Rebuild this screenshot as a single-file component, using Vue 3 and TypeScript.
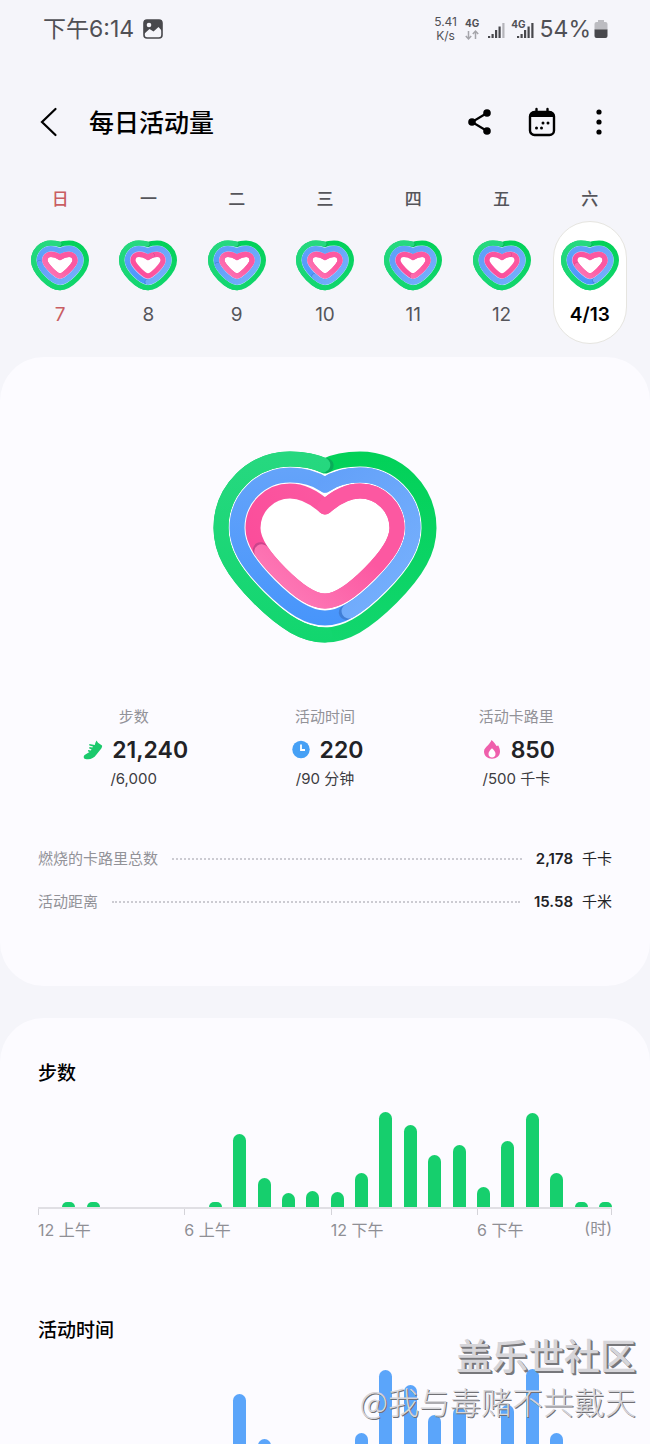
<script setup lang="ts">
interface RingSpec {
  radius: number
  reach: number
  bottom: number
  notch: number
  lift: number
}
interface Span {
  from: number
  to: number
}
interface Day {
  week: string
  label: string
  sunday?: boolean
  selected?: boolean
  blue: number
  pink: number
}

const CX = 112
const LOBE = 35
const LOBE_Y = 78
const PULL = 0.7

// Right half: lobe arc, then two curves that meet on the diagonal x + y = reach. The left half mirrors it.
function heart({ radius, reach, bottom, notch, lift }: RingSpec): string {
  const top = LOBE_Y - radius
  const edge = LOBE + radius
  const shoulder = reach - edge
  const tip = reach - bottom
  const mx = (edge + tip) / 2
  const my = (shoulder + bottom) / 2
  const shoulderY = LOBE_Y + (shoulder - LOBE_Y) * PULL
  const ux = mx + (edge - mx) * PULL
  const uy = my + (shoulder - my) * PULL
  const lx = mx + (tip - mx) * PULL
  const ly = my + (bottom - my) * PULL
  const tx = tip * PULL
  const mid = notch - lift
  return [
    `M${CX} ${notch}`,
    `C${CX + 10} ${mid} ${CX + 21} ${top} ${CX + LOBE} ${top}`,
    `A${radius} ${radius} 0 0 1 ${CX + edge} ${LOBE_Y}`,
    `C${CX + edge} ${shoulderY} ${CX + ux} ${uy} ${CX + mx} ${my}`,
    `C${CX + lx} ${ly} ${CX + tx} ${bottom} ${CX} ${bottom}`,
    `C${CX - tx} ${bottom} ${CX - lx} ${ly} ${CX - mx} ${my}`,
    `C${CX - ux} ${uy} ${CX - edge} ${shoulderY} ${CX - edge} ${LOBE_Y}`,
    `A${radius} ${radius} 0 0 1 ${CX - LOBE} ${top}`,
    `C${CX - 21} ${top} ${CX - 10} ${mid} ${CX} ${notch}Z`,
  ].join(' ')
}

function rings(specs: RingSpec[], spans: Span[]) {
  const names = ['green', 'blue', 'pink']
  return specs.map((spec, i) => ({
    name: names[i],
    d: heart(spec),
    dash: `${spans[i].to - spans[i].from} 200`,
    offset: -spans[i].from,
    shadow: -(spans[i].to + 0.6) % 100,
  }))
}

const largeSpecs: RingSpec[] = [
  { radius: 69, reach: 214, bottom: 185, notch: 16, lift: 5 },
  { radius: 53, reach: 191, bottom: 168, notch: 35, lift: 7 },
  { radius: 37, reach: 168, bottom: 151, notch: 57, lift: 9 },
]
const smallSpecs: RingSpec[] = [
  { radius: 67, reach: 213, bottom: 184, notch: 17, lift: 5 },
  { radius: 45, reach: 181, bottom: 161, notch: 42, lift: 6 },
  { radius: 23, reach: 149, bottom: 138, notch: 67, lift: 8 },
]

const today = rings(largeSpecs, [{ from: 50, to: 99.6 }, { from: 0, to: 45 }, { from: 0, to: 70 }])

const days: Day[] = [
  { week: '日', label: '7', sunday: true, blue: 74, pink: 98 },
  { week: '一', label: '8', blue: 50, pink: 5 },
  { week: '二', label: '9', blue: 72, pink: 99 },
  { week: '三', label: '10', blue: 60, pink: 97 },
  { week: '四', label: '11', blue: 99, pink: 50 },
  { week: '五', label: '12', blue: 99, pink: 9 },
  { week: '六', label: '4/13', selected: true, blue: 45, pink: 70 },
]
const week = days.map((day) => ({
  ...day,
  rings: rings(smallSpecs, [
    { from: 50, to: 99 },
    { from: 0, to: day.blue },
    { from: 0, to: day.pink },
  ]),
}))

const stats = [
  { icon: 'shoe', name: '步数', value: '21,240', goal: '/6,000' },
  { icon: 'clock', name: '活动时间', value: '220', goal: '/90 分钟' },
  { icon: 'flame', name: '活动卡路里', value: '850', goal: '/500 千卡' },
]
const totals = [
  { name: '燃烧的卡路里总数', value: '2,178', unit: '千卡' },
  { name: '活动距离', value: '15.58', unit: '千米' },
]
const charts = [
  {
    name: '步数',
    tone: 'steps',
    bars: [0, 5, 5, 0, 0, 0, 0, 5, 73, 29, 14, 16, 15, 34, 95, 82, 52, 62, 20, 66, 94, 34, 5, 5],
    hours: ['12 上午', '6 上午', '12 下午', '6 下午'],
  },
  {
    name: '活动时间',
    tone: 'time',
    bars: [0, 0, 0, 0, 0, 0, 0, 0, 70, 25, 8, 10, 9, 31, 94, 79, 49, 57, 12, 59, 95, 31, 0, 0],
    hours: [],
  },
]
</script>

<template>
  <div class="screen">
    <svg class="defs" width="0" height="0" aria-hidden="true">
      <defs>
        <linearGradient id="g-base" gradientUnits="userSpaceOnUse" x1="112" y1="0" x2="112" y2="192">
          <stop offset="0" stop-color="#02d158" /><stop offset="1" stop-color="#12d66e" />
        </linearGradient>
        <linearGradient id="g-over" gradientUnits="userSpaceOnUse" x1="112" y1="0" x2="112" y2="192">
          <stop offset="0" stop-color="#27d880" /><stop offset="1" stop-color="#12d66e" />
        </linearGradient>
        <linearGradient id="b-base" gradientUnits="userSpaceOnUse" x1="112" y1="20" x2="112" y2="176">
          <stop offset="0" stop-color="#64a3fa" /><stop offset="1" stop-color="#4795fb" />
        </linearGradient>
        <linearGradient id="b-over" gradientUnits="userSpaceOnUse" x1="100" y1="30" x2="200" y2="120">
          <stop offset="0" stop-color="#62a0f9" /><stop offset="1" stop-color="#74aefc" />
        </linearGradient>
        <linearGradient id="p-base" gradientUnits="userSpaceOnUse" x1="112" y1="50" x2="40" y2="110">
          <stop offset="0" stop-color="#fb57a0" /><stop offset="1" stop-color="#fb4c9a" />
        </linearGradient>
        <linearGradient id="p-over" gradientUnits="userSpaceOnUse" x1="160" y1="40" x2="70" y2="140">
          <stop offset="0.4" stop-color="#fc58a1" /><stop offset="1" stop-color="#fd77b5" />
        </linearGradient>
      </defs>
    </svg>

    <div class="status">
      <div class="status-left">
        <span class="time">下午6:14</span>
        <svg width="20" height="20" viewBox="0 0 20 20" aria-hidden="true">
          <rect x="1" y="1" width="18" height="18" rx="3" fill="none" stroke="#48484c" stroke-width="1.6" />
          <path d="M1 3Q1 1 3 1H17Q19 1 19 3V12L15.500 8L10.500 12.500L6.500 10L1 15Z" fill="#48484c" />
          <circle cx="6" cy="6" r="2.300" fill="#f6f5fa" />
        </svg>
      </div>
      <div class="status-right">
        <span class="speed"><span>5.41</span><span>K/s</span></span>
        <span class="network">
          <b>4G</b>
          <svg width="14" height="10" viewBox="0 0 14 10" fill="none" stroke="#a5a5aa" stroke-width="1.5" aria-hidden="true">
            <path d="M3.500 1V9M0.800 6L3.500 9L6.200 6M10.500 9V1M7.800 4L10.500 1L13.200 4" />
          </svg>
        </span>
        <svg class="signal" width="17" height="17" viewBox="0 0 17 17" fill="#48484c" aria-hidden="true">
          <path d="M0 14H2.200V16H0ZM3.500 12H5.700V16H3.500ZM7 8H9.200V16H7ZM10.500 4.500H12.700V16H10.500Z" />
          <path d="M14.300 1H16.500V16H14.300Z" fill="#b5b5ba" />
        </svg>
        <span class="sim">
          <b>4G</b>
          <svg class="signal" width="17" height="17" viewBox="0 0 17 17" fill="#48484c" aria-hidden="true">
            <path d="M0 14H2.200V16H0ZM3.500 12H5.700V16H3.500ZM7 8H9.200V16H7ZM10.500 4.500H12.700V16H10.500ZM14.300 1H16.500V16H14.300Z" />
          </svg>
        </span>
        <span class="percent">54%</span>
        <svg width="14" height="20" viewBox="0 0 14 20" aria-hidden="true">
          <path d="M4 1H10V3H11.500Q13.500 3 13.500 5V11H0.500V5Q0.500 3 2.500 3H4Z" fill="#bcbcc1" />
          <path d="M0.500 10.500H13.500V17Q13.500 19 11.500 19H2.500Q0.500 19 0.500 17Z" fill="#48484c" />
        </svg>
      </div>
    </div>

    <header class="bar">
      <button type="button" class="back" aria-label="返回">
        <svg width="18" height="30" viewBox="0 0 18 30" fill="none" stroke="#000" stroke-width="2.2" stroke-linecap="round" aria-hidden="true">
          <path d="M15.500 1L2 14L15.500 27" />
        </svg>
      </button>
      <h1>每日活动量</h1>
      <button type="button" class="share" aria-label="分享">
        <svg width="24" height="28" viewBox="0 0 24 28" aria-hidden="true">
          <path d="M20 4L5 13L20 22" fill="none" stroke="#000" stroke-width="2.2" />
          <circle cx="20" cy="4" r="3.800" /><circle cx="5" cy="13" r="3.800" /><circle cx="20" cy="22" r="3.800" />
        </svg>
      </button>
      <button type="button" class="calendar" aria-label="日历">
        <svg width="28" height="30" viewBox="0 0 28 30" aria-hidden="true">
          <path d="M8.500 1V6M19.500 1V6" stroke="#000" stroke-width="2.400" stroke-linecap="round" />
          <rect x="2" y="4" width="24" height="23" rx="4.500" fill="none" stroke="#000" stroke-width="2.400" />
          <path d="M2 9V8Q2 3.500 6 3.500H22Q26 3.500 26 8V9Z" />
          <circle cx="15" cy="15" r="1.500" /><circle cx="20" cy="15" r="1.500" />
          <circle cx="8.500" cy="20" r="1.500" /><circle cx="13.500" cy="20" r="1.500" />
        </svg>
      </button>
      <button type="button" class="more" aria-label="更多">
        <svg width="8" height="28" viewBox="0 0 8 28" aria-hidden="true">
          <circle cx="4" cy="3" r="2.600" /><circle cx="4" cy="13" r="2.600" /><circle cx="4" cy="23" r="2.600" />
        </svg>
      </button>
    </header>

    <nav class="week" aria-label="星期">
      <button v-for="day in week" :key="day.label" type="button" class="day" :class="{ sunday: day.sunday }" :aria-pressed="!!day.selected">
        <span class="weekday">{{ day.week }}</span>
        <span class="pill" :class="{ selected: day.selected }">
          <svg class="mini" viewBox="0 0 224 192" aria-hidden="true">
            <g v-for="ring in day.rings" :key="ring.name" :class="ring.name">
              <path class="base" :d="ring.d" />
              <path class="shade" :d="ring.d" pathLength="100" stroke-dasharray="0.01 200" :stroke-dashoffset="ring.shadow" />
              <path class="over" :d="ring.d" pathLength="100" :stroke-dasharray="ring.dash" :stroke-dashoffset="ring.offset" />
            </g>
          </svg>
          <span class="date">{{ day.label }}</span>
        </span>
      </button>
    </nav>

    <main>
      <section class="card summary">
        <svg class="hero" viewBox="0 0 224 192" role="img" aria-label="每日活动量">
          <g v-for="ring in today" :key="ring.name" :class="ring.name">
            <path class="base" :d="ring.d" />
            <path class="shade" :d="ring.d" pathLength="100" stroke-dasharray="0.01 200" :stroke-dashoffset="ring.shadow" />
            <path class="over" :d="ring.d" pathLength="100" :stroke-dasharray="ring.dash" :stroke-dashoffset="ring.offset" />
          </g>
        </svg>

        <ul class="stats">
          <li v-for="stat in stats" :key="stat.name">
            <span class="stat-name">{{ stat.name }}</span>
            <span class="stat-value">
              <svg width="24" height="24" viewBox="0 0 24 24" aria-hidden="true">
                <path v-if="stat.icon === 'shoe'" fill="#1bc96c" d="M17.500 2.500L19 4.800L23 7.600C23.400 8.500 22.800 9.600 22.300 10.500L17.500 16.500C15 19.800 12.500 21.200 9 21.200H7.500C4.300 21.200 4 18 6 16.700L10.500 14.100L8.800 13.300L9.300 12.100L11.800 12.500L12.600 11.500L10 10.300L10.600 9.100L13.400 9.600L14 8.600L10.300 7.600V6L15.800 7.100Q16.300 4.500 17.500 2.500Z" />
                <template v-else-if="stat.icon === 'clock'">
                  <circle cx="14" cy="11.500" r="8.700" fill="#46a0f5" />
                  <path d="M14 6.500V12H18" fill="none" stroke="#fff" stroke-width="1.800" />
                </template>
                <template v-else>
                  <path fill="#ef5fac" d="M13.500 2C16 3.800 17.300 6 18.500 8L20.300 7.500C21.300 9.500 22 11.500 22 13.500C22 17.800 18.500 20.700 14 20.700C9.500 20.700 6 17.800 6 13.500C6 10.500 8 9.500 9.700 7.500C11.300 5.700 12.800 4 13.500 2Z" />
                  <path fill="#fff" d="M14 10.300C16.300 12.500 17.500 14 17.500 16C17.500 18.300 16 19.400 14 19.400C12 19.400 10.500 18.300 10.500 16C10.500 14 11.700 12.500 14 10.300Z" />
                </template>
              </svg>
              <strong>{{ stat.value }}</strong>
            </span>
            <span class="stat-goal">{{ stat.goal }}</span>
          </li>
        </ul>

        <dl class="totals">
          <div v-for="total in totals" :key="total.name">
            <dt>{{ total.name }}</dt>
            <dd><strong>{{ total.value }}</strong><span>{{ total.unit }}</span></dd>
          </div>
        </dl>
      </section>

      <section class="card details">
        <article v-for="chart in charts" :key="chart.name" class="chart">
          <h2>{{ chart.name }}</h2>
          <div class="bars" :class="chart.tone">
            <i v-for="(value, hour) in chart.bars" :key="hour" :style="{ height: value + 'px' }"></i>
          </div>
          <div v-if="chart.hours.length" class="axis">
            <span v-for="hour in chart.hours" :key="hour">{{ hour }}</span>
            <span class="unit">(时)</span>
          </div>
        </article>
      </section>
    </main>

    <div class="watermark">
      <span class="community">盖乐世社区</span>
      <span class="author">@我与毒赌不共戴天</span>
    </div>
  </div>
</template>

<style>
html,
body {
  background: #f5f5fa;
}
</style>

<style scoped>
.screen {
  position: relative;
  height: 100vh;
  overflow: hidden;
  background: #f5f5fa;
  color: #222226;
  font-family: Inter, "Noto Sans CJK SC", sans-serif;
  font-size: 15px;
  line-height: 20px;
}
.defs {
  position: absolute;
}
button {
  margin: 0;
  padding: 0;
  border: 0;
  background: none;
  color: inherit;
  font: inherit;
}
svg {
  display: block;
  flex: none;
  overflow: visible;
}
.status {
  display: flex;
  justify-content: space-between;
  align-items: center;
  height: 57px;
  padding: 0 42px 0 43px;
  color: #505055;
}
.status-left,
.status-right {
  display: flex;
  align-items: center;
}
.status-left {
  gap: 9px;
}
.time {
  font-size: 23px;
  line-height: 32px;
}
.speed {
  display: flex;
  flex-direction: column;
  align-items: center;
  margin-right: 8px;
  font-size: 12px;
  line-height: 14px;
}
.network {
  display: flex;
  flex-direction: column;
  align-items: center;
  gap: 1px;
  margin-right: 9px;
}
b {
  font-size: 10px;
  font-weight: 700;
  line-height: 11px;
}
.signal {
  margin-top: 3px;
}
.sim {
  display: flex;
  align-items: flex-start;
  margin: 0 6px;
}
.sim .signal {
  margin-left: -9px;
}
.percent {
  margin-right: 3px;
  font-size: 23px;
  line-height: 32px;
}
.bar {
  display: flex;
  align-items: center;
  height: 60px;
  padding: 36px 47px 0 40px;
}
h1 {
  flex: 1;
  margin: 0;
  padding-left: 31px;
  color: #000;
  font-size: 25px;
  font-weight: 500;
  line-height: 36px;
}
.calendar {
  margin: 0 39px 0 37px;
}
.week {
  display: grid;
  grid-template-columns: repeat(7, 1fr);
  padding: 34px 16px 0;
  color: #55555b;
}
.day {
  display: flex;
  flex-direction: column;
  align-items: center;
}
.weekday {
  font-size: 17px;
  font-weight: 500;
  line-height: 24px;
}
.pill {
  display: flex;
  flex-direction: column;
  align-items: center;
  box-sizing: border-box;
  width: 74px;
  height: 123px;
  margin-top: 10px;
  padding-top: 18px;
  border: 1px solid transparent;
  border-radius: 37px;
}
.pill.selected {
  border-color: #e6e5e0;
  background: #fff;
}
.mini {
  width: 58px;
  height: 50px;
}
.date {
  margin-top: 13px;
  font-size: 19px;
  line-height: 24px;
}
.selected .date {
  color: #000;
  font-weight: 600;
}
.sunday {
  color: #c95e62;
}
.base,
.shade,
.over {
  fill: none;
  stroke-linejoin: round;
  stroke-linecap: round;
  stroke-width: 15px;
}
.mini .base,
.mini .shade,
.mini .over {
  stroke-width: 20px;
}
.shade {
  stroke: #222a55;
  stroke-opacity: 0.22;
}
.green .base {
  fill: #fff;
  stroke: url(#g-base);
}
.green .over {
  stroke: url(#g-over);
}
.blue .base {
  stroke: url(#b-base);
}
.blue .over {
  stroke: url(#b-over);
}
.pink .base {
  stroke: url(#p-base);
}
.pink .over {
  stroke: url(#p-over);
}
.mini .green .base {
  fill: #b5e6f4;
}
.mini .blue .base {
  fill: #d3c6f6;
}
.mini .pink .base {
  fill: #fff;
}
.card {
  border-radius: 44px;
  background: #fcfbff;
}
.summary {
  margin-top: 13px;
  padding: 93px 38px 74px;
}
.hero {
  width: 224px;
  height: 192px;
  margin: 0 auto;
}
.stats {
  display: grid;
  grid-template-columns: repeat(3, 1fr);
  margin: 65px 0 0;
  padding: 0;
  list-style: none;
}
.stats li {
  display: flex;
  flex-direction: column;
  align-items: center;
}
.stat-name,
dt {
  color: #929298;
}
.stat-value {
  display: flex;
  align-items: center;
  gap: 9px;
  margin: 9px 0 5px;
  font-size: 23px;
  line-height: 28px;
}
strong {
  font-weight: 600;
}
.stat-goal {
  color: #3c3c41;
}
.totals {
  display: grid;
  gap: 23px;
  margin: 60px 0 0;
}
.totals div {
  display: flex;
  align-items: center;
}
.totals div::before {
  content: "";
  flex: 1;
  order: 1;
  margin: 0 14px;
  border-top: 2px dotted #cccbd2;
}
dd {
  display: flex;
  order: 2;
  gap: 9px;
  margin: 0;
}
.details {
  margin-top: 32px;
  padding: 42px 38px;
}
.chart {
  margin-bottom: 77px;
}
h2 {
  margin: 0 0 10px;
  color: #000;
  font-size: 19px;
  font-weight: 500;
  line-height: 28px;
}
.bars {
  display: flex;
  justify-content: space-between;
  align-items: flex-end;
  height: 109px;
}
.bars i {
  width: 13px;
  border-radius: 7px 7px 0 0;
}
.steps i {
  background: #16cf6d;
}
.time i {
  background: #5ba5fa;
}
.axis {
  position: relative;
  display: grid;
  grid-template-columns: 255fr 255fr 255fr 235fr;
  border-top: 2px solid #e0dfe4;
  color: #8f8f95;
  font-size: 16px;
}
.axis span {
  padding-top: 11px;
}
.axis span::before {
  content: "";
  position: absolute;
  top: 0;
  width: 1px;
  height: 6px;
  background: #d4d3d9;
}
.axis .unit {
  position: absolute;
  top: 0;
  right: 0;
  padding-top: 9px;
}
.axis .unit::before {
  right: 0;
}
.watermark {
  position: absolute;
  right: 14px;
  bottom: 21px;
  display: flex;
  flex-direction: column;
  align-items: flex-end;
  color: #d6d5d9;
  font-family: "Noto Sans CJK SC", sans-serif;
  pointer-events: none;
}
.community {
  font-size: 36px;
  font-weight: 500;
  line-height: 50px;
  text-shadow: 1px 1px 0 #77777b, 2px 2px 0 #77777b;
}
.author {
  font-size: 31px;
  font-weight: 300;
  line-height: 44px;
  text-shadow: 1px 1px 0 #707075;
}
</style>
